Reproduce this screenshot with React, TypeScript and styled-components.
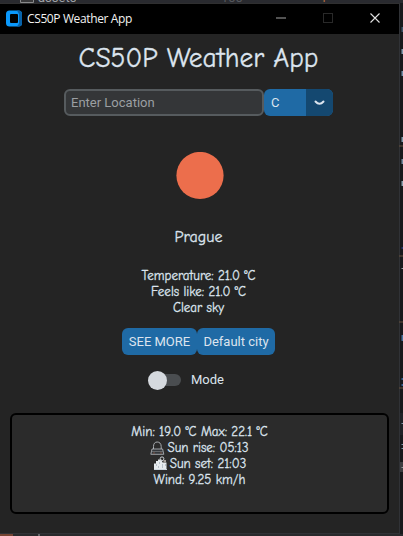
import React from 'react';
import styled, { createGlobalStyle } from 'styled-components';

const GlobalStyle = createGlobalStyle`
  * { box-sizing: border-box; }
  html, body { margin: 0; width: 403px; height: 536px; overflow: hidden; background: #18191c; }
`;

const Desktop = styled.div`
  position: relative;
  width: 403px;
  height: 536px;
  overflow: hidden;
  background: #18191c;
  font-family: Roboto, sans-serif;
`;

const Strip = styled.div`
  display: flex;
  height: 3px;
  overflow: hidden;
  background: #292a2f;
`;

const StripLabel = styled.span<{ $left: number; $color?: string }>`
  position: absolute;
  left: ${(p) => p.$left}px;
  top: -10px;
  height: 13px;
  overflow: hidden;
  font: 13px/16px Roboto, sans-serif;
  color: ${(p) => p.$color || '#a0a2a8'};
`;

const Folder = styled.svg`
  position: absolute;
  left: 20px;
  top: 0;
`;

const EdgeMarks = styled.svg`
  position: absolute;
  left: 399px;
  top: 0;
`;

const BottomMarks = styled.svg`
  display: block;
`;

const Window = styled.main`
  display: flex;
  flex-direction: column;
  width: 400px;
  height: 531px;
  background: #242424;
  border-top: 1px solid #2f2f30;
  border-right: 1px solid #303236;
  border-bottom: 1px solid #303236;
`;

const TitleBar = styled.header`
  display: flex;
  align-items: center;
  height: 30px;
  flex: none;
  padding-left: 6px;
  background: #000;
`;

const WindowName = styled.span`
  flex: 1;
  margin-left: 5px;
  font: 12px/16px 'Open Sans', sans-serif;
  letter-spacing: -0.38px;
  color: #f2f2f2;
  white-space: pre;
`;

const Controls = styled.svg`
  flex: none;
`;

const Content = styled.section`
  display: flex;
  flex-direction: column;
  align-items: center;
  width: 397px;
`;

const HandText = styled.div<{ $size: number; $line: number; $spacing?: number }>`
  margin: 0;
  font-family: 'Comic Sans MS', 'Comic Neue', 'Noto Sans', sans-serif;
  font-size: ${(p) => p.$size}px;
  font-weight: 400;
  line-height: ${(p) => p.$line}px;
  letter-spacing: ${(p) => p.$spacing ?? 0}px;
  color: #dce4ee;
  -webkit-text-stroke: 0.3px #dce4ee;
  white-space: pre;
`;

const SearchRow = styled.div`
  display: flex;
  height: 27px;
  margin-top: 7px;
`;

const Entry = styled.input`
  width: 200px;
  height: 27px;
  padding: 0 5px;
  border: 2px solid #565b5e;
  border-radius: 6px;
  background: #343638;
  color: #dce4ee;
  outline: none;
  font: 13px Roboto, sans-serif;
  &::placeholder { color: #9b9fa2; opacity: 1; }
`;

const UnitMenu = styled.button`
  display: flex;
  width: 69px;
  height: 27px;
  padding: 0;
  border: 0;
  border-radius: 6px;
  overflow: hidden;
  background: #1f6aa5;
  color: #dce4ee;
  font: 13px/27px Roboto, sans-serif;
`;

const UnitValue = styled.span`
  width: 42px;
  padding-left: 7px;
  text-align: left;
`;

const UnitArrow = styled.span`
  display: flex;
  align-items: center;
  justify-content: center;
  width: 27px;
  height: 27px;
  background: #144870;
`;

const Sun = styled.svg`
  display: block;
  margin: 36px 0 25px;
`;

const Conditions = styled.div`
  display: flex;
  flex-direction: column;
  align-items: center;
  margin-top: 19px;
`;

const Actions = styled.div`
  display: flex;
  margin-top: 12px;
`;

const Action = styled.button<{ $width: number }>`
  width: ${(p) => p.$width}px;
  height: 27px;
  padding: 0;
  border: 0;
  border-radius: 6px;
  background: #1f6aa5;
  color: #dce4ee;
  font: 13px/27px Roboto, sans-serif;
  white-space: nowrap;
`;

const ModeRow = styled.label`
  display: flex;
  align-items: center;
  width: 101px;
  height: 20px;
  margin: 15px 0 23px;
  color: #dce4ee;
  font: 13px/20px Roboto, sans-serif;
`;

const Track = styled.span`
  display: flex;
  align-items: center;
  width: 33px;
  height: 12px;
  margin-right: 10px;
  border-radius: 6px;
  background: #4a4d50;
`;

const Knob = styled.span`
  flex: none;
  width: 19px;
  height: 19px;
  border-radius: 50%;
  background: #d5d9de;
`;

const Details = styled.section`
  display: flex;
  flex-direction: column;
  align-items: center;
  align-self: flex-start;
  width: 379px;
  height: 101px;
  margin-left: 10px;
  padding-top: 9px;
  border: 2px solid #000;
  border-radius: 6px;
  background: #2b2b2b;
`;

const IconLine = styled.div`
  display: flex;
  align-items: center;
  height: 16px;
  gap: 2px;
`;

function AppIcon() {
  return (
    <svg width="16" height="18" viewBox="0 0 16 18">
      <rect x="0" y="0.5" width="16" height="16" rx="3.5" fill="#0a98fb" />
      <path d="M11 .5h1.5A3.5 3.5 0 0 1 16 4v9a3.5 3.5 0 0 1-3.5 3.5H11l2-3V4z" fill="#0862a9" />
      <rect x="4" y="4" width="8" height="9" rx="1" fill="#000" />
    </svg>
  );
}

function SunriseIcon() {
  return (
    <svg width="15" height="16" viewBox="0 0 15 16">
      <path d="M3.5 9V6.5C3.5 3.5 5 2 7.2 2s4 1.5 4 4.5V9" fill="none" stroke="#aaaeb2" />
      <path d="M2 9h10.6l1.2 5.3H.8z" fill="#34373b" stroke="#b9bdc1" strokeWidth=".8" />
      <path d="M1.8 11.5h11.4" stroke="#85898d" strokeWidth=".6" />
      <path d="M3 13h2m5 0h2" stroke="#7c5547" />
    </svg>
  );
}

function SunsetIcon() {
  return (
    <svg width="15" height="16" viewBox="0 0 15 16">
      <path d="M1 14V7.5h2V5h2V3.5h3.5l1 3h4V14z" fill="#e6ebee" />
      <circle cx="9" cy="2.8" r="1.9" fill="none" stroke="#c9ced2" />
      <path d="M10.5 4H13v2.5h-2.5z" fill="#a6a19c" />
      <path d="M3 9h1m2-2h1m2 2h1m2 0h1M5 11h1m3 0h1" stroke="#8796a4" />
      <path d="M1 13.5h13" stroke="#ced7df" />
    </svg>
  );
}

const edgeRows: [number, number, string][] = [
  [27, 5, '#3c5368'], [49, 5, '#819bae'], [71, 5, '#718fa9'],
  [137, 5, '#8099ab'], [159, 5, '#748ba0'], [181, 5, '#8ba0ae'],
  [247, 2, '#27336a'], [268, 1, '#9a9ca2'], [335, 6, '#46709c'],
  [378, 2, '#365e90'], [384, 2, '#365e90'], [423, 1, '#8098a9'],
  [444, 1, '#7996a8'], [448, 1, '#7996a8'], [467, 1, '#92969a'],
];

export default function App() {
  return (
    <>
      <GlobalStyle />
      <Desktop>
        <Strip>
          <Folder width="14" height="3" viewBox="0 0 14 3">
            <path d="M.5 0v2.5h13V0" fill="#39393b" stroke="#88898b" />
          </Folder>
          <StripLabel $left={38}>assets</StripLabel>
          <StripLabel $left={221} $color="#55575d">100</StripLabel>
          <StripLabel $left={320} $color="#b36a40">1</StripLabel>
        </Strip>
        <Window>
          <TitleBar>
            <AppIcon />
            <WindowName>CS50P Weather App</WindowName>
            <Controls width="124" height="30" viewBox="0 0 124 30">
              <path d="M1 14h10" stroke="#a5a5a5" />
              <rect x="48.5" y="9.5" width="9" height="9" fill="none" stroke="#292929" />
              <path d="M95.5 9.5l9 9m0-9l-9 9" stroke="#e2e2e2" strokeWidth="1.1" />
            </Controls>
          </TitleBar>
          <Content>
            <HandText as="h1" $size={27.5} $line={48}>CS50P Weather App</HandText>
            <SearchRow>
              <Entry placeholder="Enter Location" />
              <UnitMenu>
                <UnitValue>C</UnitValue>
                <UnitArrow>
                  <svg width="11" height="6" viewBox="0 0 11 6">
                    <path d="M1.5 1.5Q3.5 3.8 5.5 3.8T9.5 1.5" fill="none" stroke="#dce4ee" strokeWidth="2" strokeLinecap="round" />
                  </svg>
                </UnitArrow>
              </UnitMenu>
            </SearchRow>
            <Sun width="50" height="48" viewBox="0 0 50 48">
              <circle cx="26" cy="23.5" r="23.6" fill="#ec6e4c" />
            </Sun>
            <HandText $size={16} $line={24}>Prague</HandText>
            <Conditions>
              <HandText $size={13} $line={16}>Temperature: 21.0 °C</HandText>
              <HandText $size={13} $line={16}>Feels like: 21.0 °C</HandText>
              <HandText $size={13} $line={16}>Clear sky</HandText>
            </Conditions>
            <Actions>
              <Action $width={75}>SEE MORE</Action>
              <Action $width={78}>Default city</Action>
            </Actions>
            <ModeRow><Track><Knob /></Track>Mode</ModeRow>
          </Content>
          <Details>
            <HandText $size={13} $line={16}>Min: 19.0 °C Max: 22.1 °C</HandText>
            <IconLine><SunriseIcon /><HandText $size={13} $line={16}>Sun rise: 05:13</HandText></IconLine>
            <IconLine><SunsetIcon /><HandText $size={13} $line={16}>Sun set: 21:03</HandText></IconLine>
            <HandText $size={13} $line={16}>Wind: 9.25 km/h</HandText>
          </Details>
        </Window>
        <BottomMarks width="403" height="2" viewBox="0 0 403 2">
          <rect width="403" height="2" fill="#292a2c" />
          <path d="M0 0h13v2H0z" fill="#754432" />
          <path d="M38 1h2" stroke="#a4a6aa" />
        </BottomMarks>
        <EdgeMarks width="4" height="536" viewBox="0 0 4 536">
          <rect x="1" y="413" width="3" height="22" fill="#202126" />
          <rect x="1" y="462" width="3" height="10" fill="#3c3d40" />
          {edgeRows.map(([y, h, color]) => <rect key={y} x="2.5" y={y} width="1.5" height={h} fill={color} />)}
          <path d="M0 146h4M0 256h4M0 322h4M0 388h4" stroke="#66513d" />
        </EdgeMarks>
      </Desktop>
    </>
  );
}
